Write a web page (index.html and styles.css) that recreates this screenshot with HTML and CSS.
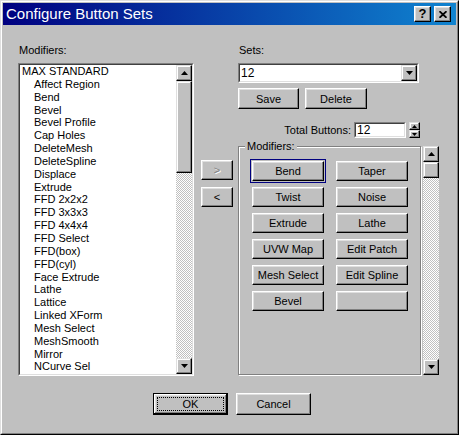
FILE: index.html
```html
<!DOCTYPE html>
<html>
<head>
<meta charset="utf-8">
<link rel="stylesheet" href="styles.css">
</head>
<body>
<div class="window">
  <div class="frame">
    <div class="titlebar">
      <span class="title">Configure Button Sets</span>
      <div class="caption-btns">
        <span class="cap-btn help">?</span>
        <span class="cap-btn close"><svg width="8" height="7" viewBox="0 0 8 7"><path d="M0.5 0.2L7.5 6.8M7.5 0.2L0.5 6.8" stroke="#000" stroke-width="1.8"/></svg></span>
      </div>
    </div>
    <div class="client">
      <div class="main">
        <div class="col-left">
          <div class="label">Modifiers:</div>
          <div class="sunken listbox">
            <div class="sunken-in list-in">
              <ul class="items">
                <li class="top">MAX STANDARD</li>
                <li>Affect Region</li>
                <li>Bend</li>
                <li>Bevel</li>
                <li>Bevel Profile</li>
                <li>Cap Holes</li>
                <li>DeleteMesh</li>
                <li>DeleteSpline</li>
                <li>Displace</li>
                <li>Extrude</li>
                <li>FFD 2x2x2</li>
                <li>FFD 3x3x3</li>
                <li>FFD 4x4x4</li>
                <li>FFD Select</li>
                <li>FFD(box)</li>
                <li>FFD(cyl)</li>
                <li>Face Extrude</li>
                <li>Lathe</li>
                <li>Lattice</li>
                <li>Linked XForm</li>
                <li>Mesh Select</li>
                <li>MeshSmooth</li>
                <li>Mirror</li>
                <li>NCurve Sel</li>
              </ul>
              <div class="vscroll">
                <span class="raised sb-btn"><svg width="7" height="4" viewBox="0 0 7 4"><path d="M3.5 0L7 4H0z"/></svg></span>
                <span class="raised list-thumb"></span>
                <span class="track"></span>
                <span class="raised sb-btn"><svg width="7" height="4" viewBox="0 0 7 4"><path d="M0 0H7L3.5 4z"/></svg></span>
              </div>
            </div>
          </div>
        </div>
        <div class="col-mid">
          <div class="btn move disabled">&gt;</div>
          <div class="btn move">&lt;</div>
        </div>
        <div class="col-right">
          <div class="label">Sets:</div>
          <div class="sunken combo">
            <div class="sunken-in combo-in">
              <span class="combo-text">12</span>
              <span class="raised sb-btn"><svg width="7" height="4" viewBox="0 0 7 4"><path d="M0 0H7L3.5 4z"/></svg></span>
            </div>
          </div>
          <div class="set-actions">
            <div class="btn set-btn">Save</div>
            <div class="btn set-btn">Delete</div>
          </div>
          <div class="total-row">
            <span class="total-label">Total Buttons:</span>
            <div class="sunken num">
              <div class="sunken-in num-in">12</div>
            </div>
            <div class="spinner">
              <span class="raised spin-btn"><svg width="5" height="3" viewBox="0 0 5 3"><path d="M2.5 0L5 3H0z"/></svg></span>
              <span class="raised spin-btn"><svg width="5" height="3" viewBox="0 0 5 3"><path d="M0 0H5L2.5 3z"/></svg></span>
            </div>
          </div>
          <div class="group-row">
            <div class="group">
              <span class="group-label">Modifiers:</span>
              <div class="mod-grid">
                <div class="btn mod focused">Bend</div>
                <div class="btn mod">Taper</div>
                <div class="btn mod">Twist</div>
                <div class="btn mod">Noise</div>
                <div class="btn mod">Extrude</div>
                <div class="btn mod">Lathe</div>
                <div class="btn mod">UVW Map</div>
                <div class="btn mod">Edit Patch</div>
                <div class="btn mod">Mesh Select</div>
                <div class="btn mod">Edit Spline</div>
                <div class="btn mod">Bevel</div>
                <div class="btn mod"></div>
              </div>
            </div>
            <div class="vscroll side-scroll">
              <span class="raised sb-btn"><svg width="7" height="4" viewBox="0 0 7 4"><path d="M3.5 0L7 4H0z"/></svg></span>
              <span class="raised side-thumb"></span>
              <span class="track"></span>
              <span class="raised sb-btn"><svg width="7" height="4" viewBox="0 0 7 4"><path d="M0 0H7L3.5 4z"/></svg></span>
            </div>
          </div>
        </div>
      </div>
      <div class="footer">
        <div class="btn dlg default"><span class="focus">OK</span></div>
        <div class="btn dlg">Cancel</div>
      </div>
    </div>
  </div>
</div>
</body>
</html>
```
FILE: styles.css
```css
* { box-sizing: border-box; margin: 0; padding: 0; }
html, body { width: 459px; height: 435px; overflow: hidden; background: #c0c0c0; }
body { font-family: "Liberation Sans", Arial, sans-serif; font-size: 11px; color: #000; }

.window {
  width: 459px; height: 435px;
  border: 1px solid; border-color: #dfdfdf #000 #000 #dfdfdf;
  display: flex; flex-direction: column;
}
.frame {
  flex: 1; display: flex; flex-direction: column;
  border: 1px solid; border-color: #fff #808080 #808080 #fff;
  padding: 1px;
}

.titlebar {
  height: 22px; flex: none;
  display: flex; align-items: center; justify-content: space-between;
  padding: 0 5px 0 3px;
  background: linear-gradient(to right, #000080, #1084d0);
  color: #fff;
}
.title { font-size: 15px; line-height: 22px; }
.caption-btns { display: flex; gap: 3px; }
.cap-btn {
  width: 17px; height: 16px;
  display: flex; align-items: center; justify-content: center;
  background: #c0c0c0; color: #000;
  border: 1px solid; border-color: #fff #000 #000 #fff;
  box-shadow: inset -1px -1px #808080, inset 1px 1px #dfdfdf;
}
.help { font-weight: bold; font-size: 13px; line-height: 14px; padding-bottom: 1px; }

.raised {
  background: #c0c0c0;
  border: 1px solid; border-color: #dfdfdf #000 #000 #dfdfdf;
  box-shadow: inset -1px -1px #808080, inset 1px 1px #fff;
}
.btn {
  background: #c0c0c0;
  border: 1px solid; border-color: #fff #000 #000 #fff;
  box-shadow: inset -1px -1px #808080, inset 1px 1px #dfdfdf;
  display: flex; align-items: center; justify-content: center;
  white-space: nowrap;
}
.sunken { border: 1px solid; border-color: #808080 #fff #fff #808080; }
.sunken-in { border: 1px solid; border-color: #404040 #dfdfdf #dfdfdf #404040; height: 100%; }

.client { flex: 1; display: flex; flex-direction: column; padding: 19px 0 0 15px; }
.main { display: flex; align-items: flex-start; }
.label { height: 13px; line-height: 13px; margin-bottom: 6px; padding-left: 1px; }

.col-left { width: 176px; flex: none; }
.listbox { height: 313px; }
.list-in { display: flex; background: #fff; }
.items { list-style: none; flex: 1; overflow: hidden; }
.items li { height: 12.85px; line-height: 12.85px; padding-left: 14px; white-space: nowrap; }
.items li.top { padding-left: 2px; }

.vscroll { width: 16px; flex: none; display: flex; flex-direction: column; }
.sb-btn { width: 16px; height: 16px; flex: none; display: flex; align-items: center; justify-content: center; }
.list-thumb { height: 92px; flex: none; }
.side-thumb { height: 16px; flex: none; }
.track {
  flex: 1;
  background-color: #fff;
  background-image: repeating-conic-gradient(#c0c0c0 0 25%, #fff 0 50%);
  background-size: 2px 2px;
}

.col-mid { width: 32px; margin-left: 7px; padding-top: 116px; display: flex; flex-direction: column; gap: 7px; flex: none; }
.move { height: 20px; font-size: 11px; }
.disabled { color: #808080; text-shadow: 1px 1px #fff; }

.col-right { width: 202px; margin-left: 5px; flex: none; }
.combo { width: 181px; height: 20px; }
.combo-in { display: flex; background: #fff; }
.combo-text { flex: 1; line-height: 16px; padding-left: 1px; font-size: 12px; }

.set-actions { display: flex; gap: 6px; margin-top: 5px; }
.set-btn { height: 21px; }
.set-btn:first-child { width: 61px; }
.set-btn:last-child { width: 62px; }

.total-row { display: flex; align-items: center; justify-content: flex-end; width: 182px; height: 16px; margin-top: 13px; }
.total-label { margin-right: 3px; }
.num { width: 52px; height: 16px; }
.num-in { background: #fff; line-height: 13px; padding-left: 1px; font-size: 12px; }
.spinner { width: 11px; height: 16px; margin-left: 3px; display: flex; flex-direction: column; }
.spin-btn { height: 8px; display: flex; align-items: center; justify-content: center; }

.group-row { display: flex; margin-top: 8px; height: 229px; }
.group {
  position: relative;
  width: 183px; height: 100%;
  border: 1px solid #808080;
  box-shadow: 1px 1px 0 #fff, inset 1px 1px 0 #fff;
  padding: 14px 0 0 13px;
}
.group-label {
  position: absolute; top: -7px; left: 6px;
  background: #c0c0c0; padding: 0 2px;
  line-height: 13px;
}
.mod-grid { display: grid; grid-template-columns: 72px 72px; grid-auto-rows: 20px; column-gap: 12px; row-gap: 6px; }
.focused { outline: 1px solid #000080; outline-offset: 1px; }
.side-scroll { margin-left: 2px; height: 100%; }

.footer { display: flex; gap: 8px; margin-top: 17px; margin-left: 135px; }
.dlg { width: 75px; height: 22px; }
.default {
  border: 1px solid #000;
  box-shadow: inset -1px -1px #000, inset 1px 1px #fff, inset -2px -2px #808080, inset 2px 2px #dfdfdf;
  padding: 3px;
  align-items: stretch;
}
.focus { flex: 1; border: 1px dotted #000; display: flex; align-items: center; justify-content: center; }
```
